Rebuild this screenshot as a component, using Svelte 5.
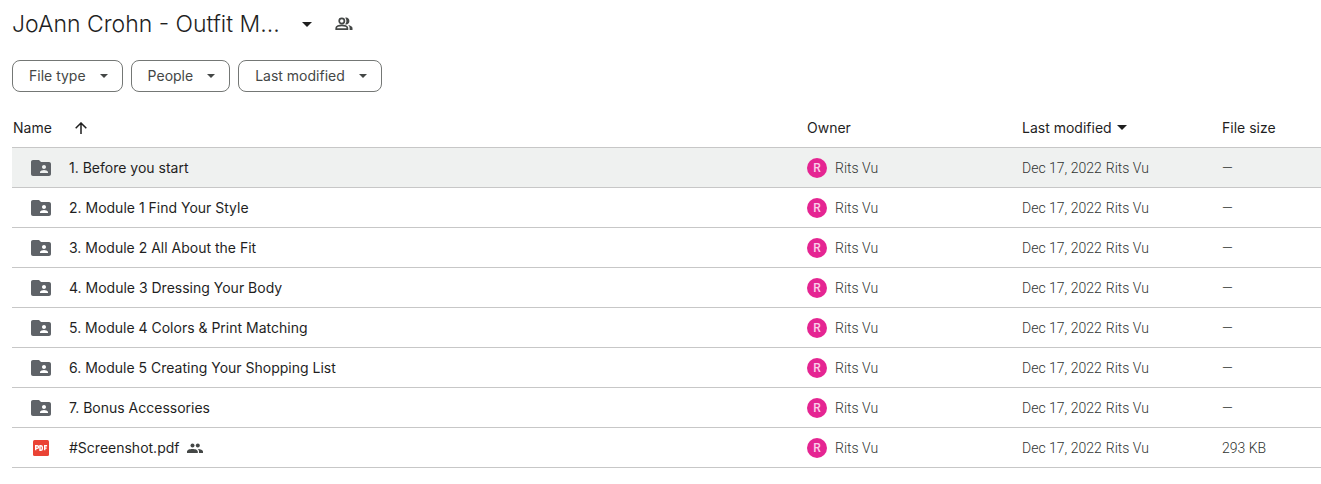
<script>
  const filters = ['File type', 'People', 'Last modified'];
  const owner = 'Rits Vu';
  const date = 'Dec 17, 2022';
  const files = [
    { name: '1. Before you start', size: '—', selected: true },
    { name: '2. Module 1 Find Your Style', size: '—' },
    { name: '3. Module 2 All About the Fit', size: '—' },
    { name: '4. Module 3 Dressing Your Body', size: '—' },
    { name: '5. Module 4 Colors & Print Matching', size: '—' },
    { name: '6. Module 5 Creating Your Shopping List', size: '—' },
    { name: '7. Bonus Accessories', size: '—' },
    { name: '#Screenshot.pdf', size: '293 KB', pdf: true }
  ];
</script>

{#snippet caret()}
  <svg class="caret" width="10" height="5" viewBox="0 0 10 5" aria-hidden="true"><path d="M0 0h10L5 5z" /></svg>
{/snippet}

<main>
  <header>
    <h1><button class="title">JoAnn Crohn - Outfit M...{@render caret()}</button></h1>
    <button class="share" aria-label="Manage access">
      <svg width="20" height="20" viewBox="0 0 20 20" fill="none" stroke="#444746" stroke-width="1.7" aria-hidden="true">
        <circle cx="7.8" cy="7" r="2.6" />
        <path d="M2.2 15.2v-1.3c0-1.4 2.8-2.5 5.6-2.5s5.6 1.1 5.6 2.5v1.3z" />
        <path fill="#444746" stroke="none" d="M11.2 10.3c.8-.9 1.2-2 1.2-3.3s-.4-2.4-1.2-3.3c2-.7 4.2.9 4.2 3.3s-2.2 4-4.2 3.3zM15.6 16v-2.1c0-1.2-.5-2.2-1.4-3 2.3.5 4.3 1.5 4.3 3V16z" />
      </svg>
    </button>
  </header>

  <div class="filters">
    {#each filters as label}
      <button class="chip">{label}<svg width="8" height="4" viewBox="0 0 8 4" aria-hidden="true"><path d="M0 0h8L4 4z" /></svg></button>
    {/each}
  </div>

  <table>
    <colgroup><col /><col class="owner-col" /><col class="date-col" /><col class="size-col" /></colgroup>
    <thead>
      <tr>
        <th scope="col">
          <div class="heading name-heading">
            <button>Name</button>
            <button aria-label="Reverse sort direction">
              <svg width="12" height="12" viewBox="0 0 12 12" fill="none" stroke="#1f1f1f" stroke-width="1.5" aria-hidden="true"><path d="M6 12V1M.7 6.3 6 1l5.3 5.3" /></svg>
            </button>
          </div>
        </th>
        <th scope="col">Owner</th>
        <th scope="col"><button class="heading">Last modified{@render caret()}</button></th>
        <th scope="col">File size</th>
      </tr>
    </thead>
    <tbody>
      {#each files as file}
        <tr class:selected={file.selected}>
          <td>
            <div class="file">
              {#if file.pdf}
                <svg width="24" height="24" viewBox="0 0 24 24" aria-hidden="true">
                  <rect x="4" y="4" width="16" height="16" rx="1.5" fill="#ea4335" />
                  <path d="M6.7 14.3v-4.6h1.5a1.2 1.2 0 0 1 0 2.7H6.7M11 9.7v4.6h.8c1 0 1.5-.5 1.5-1.3V11c0-.8-.5-1.3-1.5-1.3zM15.7 14.3V9.7h2.4M15.7 12.1h2" fill="none" stroke="#fff" stroke-width="1.4" />
                </svg>
              {:else}
                <svg width="24" height="24" viewBox="0 0 24 24" aria-hidden="true">
                  <path fill="#5f6368" d="M20 6h-8l-2-2H4c-1.1 0-2 .9-2 2v12c0 1.1.9 2 2 2h16c1.1 0 2-.9 2-2V8c0-1.1-.9-2-2-2zm-5 3c1.1 0 2 .9 2 2s-.9 2-2 2-2-.9-2-2 .9-2 2-2zm4 8h-8v-1c0-1.33 2.67-2 4-2s4 .67 4 2v1z" />
                </svg>
              {/if}
              <span>{file.name}</span>
              {#if file.pdf}
                <svg class="shared" width="16" height="16" viewBox="0 0 16 16" role="img" aria-label="Shared">
                  <circle cx="5.5" cy="5.5" r="2" /><circle cx="10.8" cy="5.5" r="2" />
                  <path d="M0 13v-1.4c0-1.8 2.8-2.6 5.4-2.6s5.4.8 5.4 2.6V13zM12 13v-1.4c0-1.1-.5-1.9-1.3-2.5 2.5-.1 5.3.8 5.3 2.5V13z" />
                </svg>
              {/if}
            </div>
          </td>
          <td><div class="owner"><span class="avatar">R</span>{owner}</div></td>
          <td><span class="date">{date}</span>{owner}</td>
          <td>{file.size}</td>
        </tr>
      {/each}
    </tbody>
  </table>
</main>

<style>
  :global(body) { background: #fff; }
  main {
    padding: 4px 0 16px 12px;
    font: 400 14px/20px Inter, Roboto, sans-serif;
    color: #1f1f1f;
  }
  button {
    padding: 0;
    border: 0;
    background: none;
    color: inherit;
    font: inherit;
    cursor: pointer;
  }
  svg { display: block; flex: none; }
  header { display: flex; align-items: center; gap: 22px; height: 40px; }
  h1 { margin: 0; font: inherit; }
  .title { display: flex; align-items: center; gap: 22px; font-size: 23px; line-height: 32px; font-weight: 300; }
  .caret { fill: #1f1f1f; }
  .filters { display: flex; gap: 8px; margin-top: 16px; }
  .chip {
    display: flex;
    align-items: center;
    gap: 14px;
    height: 32px;
    padding: 0 14px 0 16px;
    border: 1px solid #747775;
    border-radius: 8px;
    color: #444746;
  }
  .chip svg { fill: #444746; }
  table { width: 100%; margin-top: 16px; border-collapse: separate; border-spacing: 0; table-layout: fixed; }
  .owner-col { width: 215px; }
  .date-col { width: 200px; }
  .size-col { width: 99px; }
  th, td { height: 39px; padding: 0; border-bottom: 1px solid #c7c7c7; text-align: left; font-weight: 400; white-space: nowrap; }
  td { color: #303331; font-family: Roboto, sans-serif; font-weight: 300; }
  .heading { display: flex; align-items: center; gap: 5px; }
  .name-heading { gap: 23px; padding-left: 1px; }
  .selected td { background: #eff1f0; }
  .file { display: flex; align-items: center; padding-left: 17px; color: #1f1f1f; font-family: Inter, Roboto, sans-serif; font-weight: 400; }
  .file span { margin-left: 16px; }
  .shared { margin-left: 8px; fill: #444746; }
  .owner { display: flex; align-items: center; gap: 8px; }
  .avatar {
    width: 20px;
    height: 20px;
    border-radius: 50%;
    background: #e52592;
    color: #fbcfe8;
    font-size: 12px;
    font-weight: 500;
    text-align: center;
  }
  .date { margin-right: 4px; }
</style>
